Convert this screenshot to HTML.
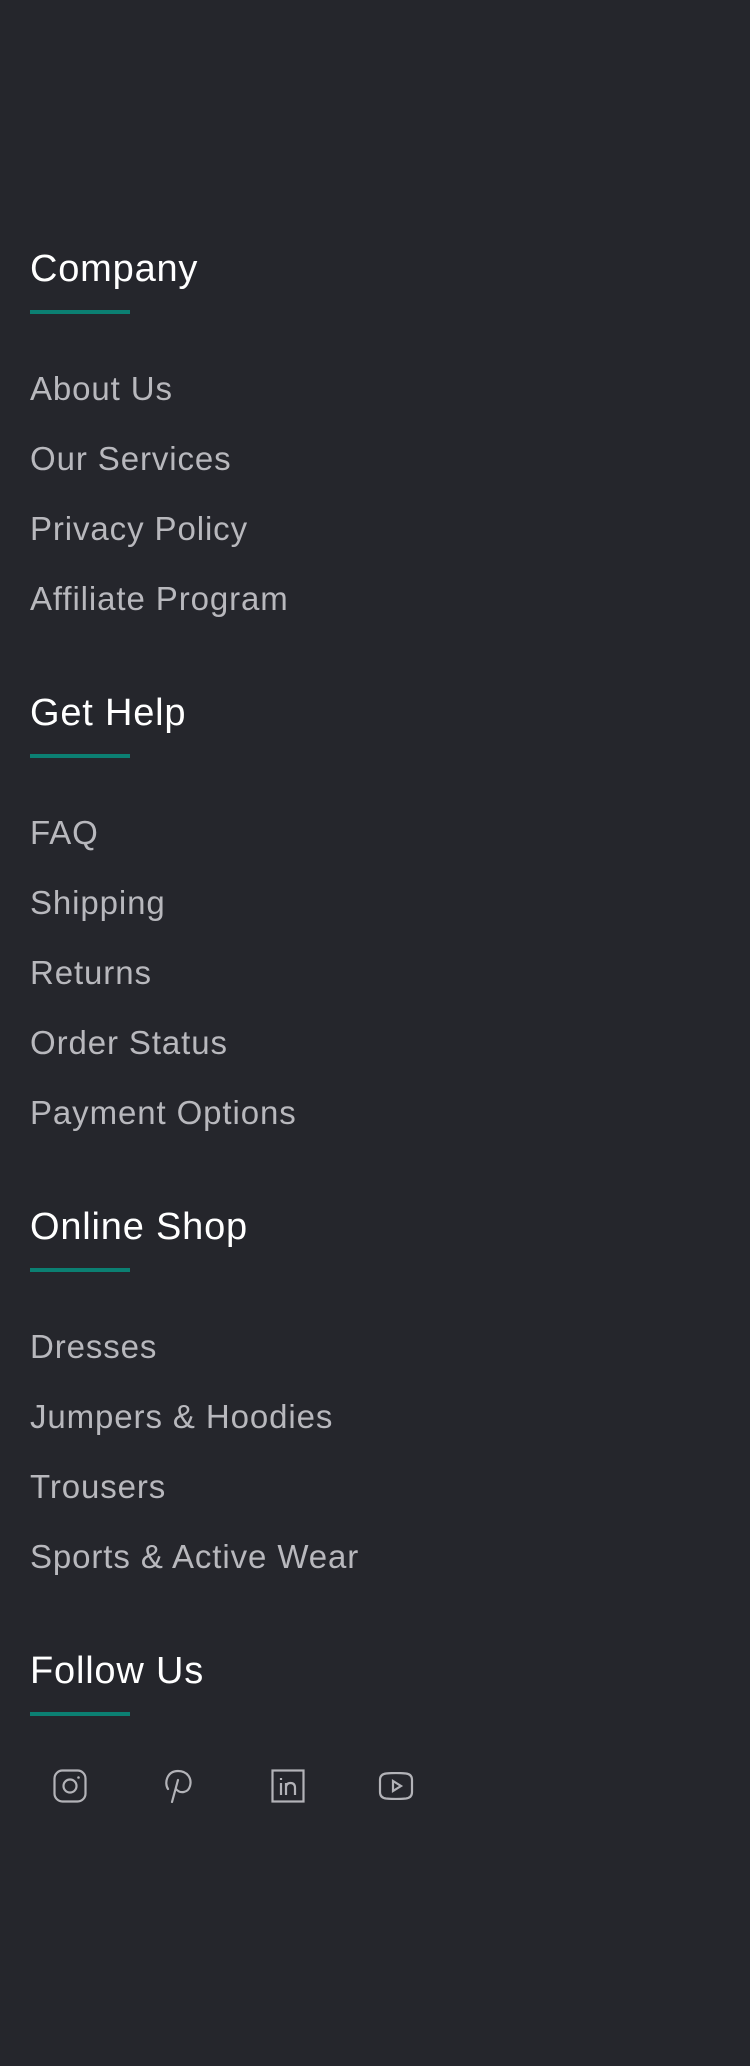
<!DOCTYPE html>
<html><head><meta charset="utf-8"><style>
html,body{margin:0;padding:0}
body{width:750px;height:2066px;background:#25262c;position:relative;overflow:hidden;font-family:"Liberation Sans",sans-serif}
.h{position:absolute;left:30px;font-size:38px;line-height:1;color:#fff;white-space:nowrap;letter-spacing:0.8px}
.u{position:absolute;left:30px;width:100px;height:4px;background:#0b7f72}
.l{position:absolute;left:30px;font-size:33px;line-height:1;color:#b8b8bd;white-space:nowrap;letter-spacing:0.9px}
svg{position:absolute}
</style></head><body>
<div class="h" style="top:250px">Company</div><div class="u" style="top:310px"></div>
<div class="l" style="top:372px">About Us</div>
<div class="l" style="top:442px">Our Services</div>
<div class="l" style="top:512px">Privacy Policy</div>
<div class="l" style="top:582px">Affiliate Program</div>

<div class="h" style="top:694px">Get Help</div><div class="u" style="top:754px"></div>
<div class="l" style="top:816px">FAQ</div>
<div class="l" style="top:886px">Shipping</div>
<div class="l" style="top:956px">Returns</div>
<div class="l" style="top:1026px">Order Status</div>
<div class="l" style="top:1096px">Payment Options</div>

<div class="h" style="top:1208px">Online Shop</div><div class="u" style="top:1268px"></div>
<div class="l" style="top:1330px">Dresses</div>
<div class="l" style="top:1400px">Jumpers &amp; Hoodies</div>
<div class="l" style="top:1470px">Trousers</div>
<div class="l" style="top:1540px">Sports &amp; Active Wear</div>

<div class="h" style="top:1652px">Follow Us</div><div class="u" style="top:1712px"></div>

<svg style="left:53px;top:1769px" width="34" height="34" viewBox="0 0 34 34" fill="none" stroke="#b3b3b8" stroke-width="2.2"><rect x="1.5" y="1.5" width="31" height="31" rx="8"/><circle cx="17" cy="17" r="6.5"/><circle cx="25.5" cy="8.5" r="1.3" fill="#b3b3b8" stroke="none"/></svg>
<svg style="left:163px;top:1769px" width="32" height="34" viewBox="0 0 32 34" fill="none" stroke="#b3b3b8" stroke-width="2.2" stroke-linecap="round"><path d="M5 20 C1 14 4 2 15 2 C25 2 29 10 27 17 C25 24 17 25 13 20"/><path d="M15 11 L9 33"/></svg>
<svg style="left:271px;top:1769px" width="34" height="34" viewBox="0 0 34 34" fill="none" stroke="#b3b3b8" stroke-width="2.2"><rect x="1.5" y="1.5" width="31" height="31"/><path d="M10 14v12M10 9v2M15 14v12M15 19c0-4 2-5 4.5-5s4.5 1 4.5 5v7"/></svg>
<svg style="left:378px;top:1772px" width="36" height="28" viewBox="0 0 36 28" fill="none" stroke="#b3b3b8" stroke-width="2.2"><path d="M2 8c0-4 2-6 6-6.5 7-.7 13-.7 20 0 4 .5 6 2.5 6 6.5v12c0 4-2 6-6 6.5-7 .7-13 .7-20 0-4-.5-6-2.5-6-6.5z"/><path d="M15 9v10l8-5z"/></svg>
</body></html>
